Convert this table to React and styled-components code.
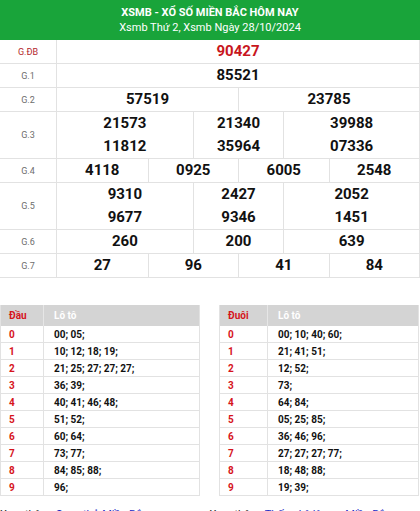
import React from "react";
import styled, { createGlobalStyle } from "styled-components";

const Global = createGlobalStyle`
  html, body { margin: 0; padding: 0; background: #fff; }
  body { font-family: Roboto, "Liberation Sans", Arial, sans-serif; overflow: hidden; }
`;

const Page = styled.div`
  width: 420px;
`;

const Header = styled.div`
  background: #19a43a;
  height: 40px;
  color: #fff;
  display: flex;
  flex-direction: column;
  align-items: center;
  justify-content: center;
  gap: 2px;
`;

const Title = styled.div`
  font-size: 11px;
  font-weight: 700;
  line-height: 13px;
`;

const Sub = styled.div`
  font-size: 11px;
  line-height: 13px;
`;

const Table = styled.div`
  width: 419px;
  border-right: 1px solid #e2e2e2;
`;

const Row = styled.div`
  display: grid;
  grid-template-columns: 57px 1fr;
  border-bottom: 1px solid #e2e2e2;
  height: ${(p) => (p.$double ? 46 : 23)}px;
`;

const Label = styled.div`
  display: flex;
  align-items: center;
  justify-content: center;
  font-size: 9px;
  color: ${(p) => (p.$special ? "#b3262b" : "#6d6d6d")};
  border-right: 1px solid #e2e2e2;
`;

const Cells = styled.div`
  display: grid;
  grid-template-columns: ${(p) => p.$cols};
`;

const Cell = styled.div`
  display: flex;
  flex-direction: column;
  align-items: center;
  justify-content: space-around;
  border-left: 1px solid #e2e2e2;
  &:first-child { border-left: none; }
`;

const Num = styled.div`
  font-size: 15px;
  font-weight: 700;
  line-height: 23px;
  color: ${(p) => (p.$red ? "#c8161d" : "#111")};
`;

const Lower = styled.div`
  display: flex;
  justify-content: space-between;
  margin-top: 27px;
  width: 419px;
`;

const Loto = styled.div`
  width: 200px;
  border: 1px solid #e2e2e2;
  border-top: none;
  box-sizing: border-box;
`;

const LRow = styled.div`
  display: grid;
  grid-template-columns: ${(p) => p.$first}px 1fr;
  height: ${(p) => (p.$head ? 21 : 16)}px;
  background: ${(p) => (p.$head ? "#d4d4d4" : "#fff")};
  border-bottom: ${(p) => (p.$head ? "none" : "1px solid #e2e2e2")};
  &:last-child { border-bottom: none; }
`;

const LKey = styled.div`
  display: flex;
  align-items: center;
  padding-left: 8px;
  font-size: 10px;
  font-weight: 700;
  color: #d6141c;
  border-right: 1px solid ${(p) => (p.$head ? "#e6e6e6" : "#e2e2e2")};
`;

const LVal = styled.div`
  display: flex;
  align-items: center;
  padding-left: 10px;
  font-size: 10px;
  font-weight: 700;
  color: ${(p) => (p.$head ? "#fff" : "#111")};
`;

const More = styled.div`
  display: flex;
  width: 419px;
  margin-top: 12px;
  font-size: 11px;
  line-height: 14px;
`;

const MoreItem = styled.div`
  width: 219px;
  color: #222;
  white-space: nowrap;
  a { color: #1d2bc4; text-decoration: none; }
`;

const prizes = [
  { label: "G.ĐB", special: true, cols: "1fr", cells: [["90427"]] },
  { label: "G.1", cols: "1fr", cells: [["85521"]] },
  { label: "G.2", cols: "1fr 1fr", cells: [["57519"], ["23785"]] },
  { label: "G.3", double: true, cols: "3fr 2fr 3fr", cells: [["21573", "11812"], ["21340", "35964"], ["39988", "07336"]] },
  { label: "G.4", cols: "1fr 1fr 1fr 1fr", cells: [["4118"], ["0925"], ["6005"], ["2548"]] },
  { label: "G.5", double: true, cols: "3fr 2fr 3fr", cells: [["9310", "9677"], ["2427", "9346"], ["2052", "1451"]] },
  { label: "G.6", cols: "3fr 2fr 3fr", cells: [["260"], ["200"], ["639"]] },
  { label: "G.7", cols: "1fr 1fr 1fr 1fr", cells: [["27"], ["96"], ["41"], ["84"]] },
];

const dau = ["00; 05;", "10; 12; 18; 19;", "21; 25; 27; 27; 27;", "36; 39;", "40; 41; 46; 48;", "51; 52;", "60; 64;", "73; 77;", "84; 85; 88;", "96;"];
const duoi = ["00; 10; 40; 60;", "21; 41; 51;", "12; 52;", "73;", "64; 84;", "05; 25; 85;", "36; 46; 96;", "27; 27; 27; 77;", "18; 48; 88;", "19; 39;"];

function LotoTable({ title, first, rows }) {
  return (
    <Loto>
      <LRow $head $first={first}>
        <LKey $head>{title}</LKey>
        <LVal $head>Lô tô</LVal>
      </LRow>
      {rows.map((r, i) => (
        <LRow key={i} $first={first}>
          <LKey>{i}</LKey>
          <LVal>{r}</LVal>
        </LRow>
      ))}
    </Loto>
  );
}

export default function App() {
  return (
    <Page>
      <Global />
      <Header>
        <Title>XSMB - XỔ SỐ MIỀN BẮC HÔM NAY</Title>
        <Sub>Xsmb Thứ 2, Xsmb Ngày 28/10/2024</Sub>
      </Header>
      <Table>
        {prizes.map((p) => (
          <Row key={p.label} $double={p.double}>
            <Label $special={p.special}>{p.label}</Label>
            <Cells $cols={p.cols}>
              {p.cells.map((c, i) => (
                <Cell key={i}>
                  {c.map((n) => (
                    <Num key={n} $red={p.special}>{n}</Num>
                  ))}
                </Cell>
              ))}
            </Cells>
          </Row>
        ))}
      </Table>
      <Lower>
        <LotoTable title="Đầu" first={43} rows={dau} />
        <LotoTable title="Đuôi" first={48} rows={duoi} />
      </Lower>
      <More>
        <MoreItem>Xem thêm: <a href="#">Quay thử Miền Bắc</a></MoreItem>
        <MoreItem>Xem thêm: <a href="#">Thống kê lô gan Miền Bắc</a></MoreItem>
      </More>
    </Page>
  );
}
